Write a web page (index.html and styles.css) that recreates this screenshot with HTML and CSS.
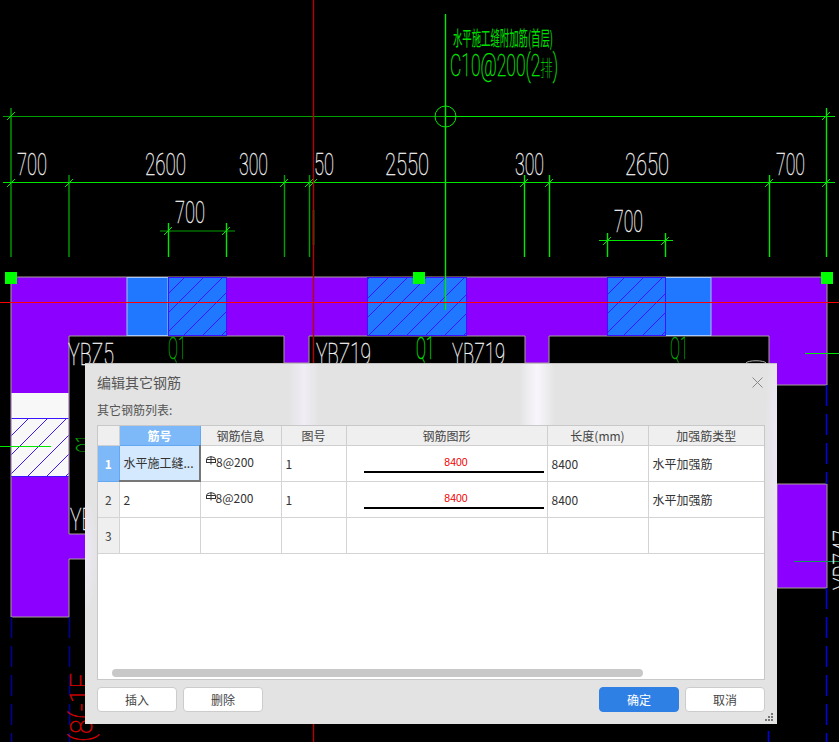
FILE: index.html
```html
<!DOCTYPE html>
<html lang="zh-CN">
<head>
  <meta charset="UTF-8" />
  <title>编辑其它钢筋</title>
  <link rel="stylesheet" href="styles.css">
</head>
<body>
  <!-- CAD drawing behind the dialog -->
  <svg class="cad" width="839" height="742" viewBox="0 0 839 742">
    <defs>
      <pattern id="hatch" width="19" height="19" patternUnits="userSpaceOnUse">
        <path class="hatch-line" d="M-1 20L20 -1"/>
      </pattern>
      <pattern id="hatch1" href="#hatch" x="6"/>
      <pattern id="hatch2" href="#hatch" x="1"/>
      <pattern id="hatch3" href="#hatch" x="9"/>
      <pattern id="hatch4" href="#hatch" x="10"/>
    </defs>

    <!-- wall -->
    <path class="wall" d="M11 277H827V385H769V336H549V363H525V336H309V363H284V336H69V534H110V559H69V617H11Z"/>
    <path class="wall" d="M777 484H827V588H777Z"/>

    <rect class="column" x="127" y="277.5" width="41" height="58"/>
    <rect class="column" x="665" y="277.5" width="46" height="58"/>
    <rect class="block" x="168.500" y="277.500" width="58" height="58"/>
    <rect class="block" x="367.500" y="277.500" width="99" height="58"/>
    <rect class="block" x="607.500" y="277.500" width="58" height="58"/>
    <rect x="168.500" y="277.500" width="58" height="58" fill="url(#hatch1)"/>
    <rect x="367.500" y="277.500" width="99" height="58" fill="url(#hatch2)"/>
    <rect x="607.500" y="277.500" width="58" height="58" fill="url(#hatch3)"/>

    <rect class="blank" x="11.500" y="393" width="57" height="83"/>
    <rect x="11.500" y="418" width="57" height="58" fill="url(#hatch4)"/>
    <path class="block-edge" d="M11.500 418.500H68.500M11.500 476.500H68.500"/>

    <!-- dashed axes -->
    <path class="axis-dark" d="M11.500 617V742M69.500 617V742"/>
    <path class="axis" d="M826.500 385V484M826.500 588V742M768.500 731V742"/>

    <!-- dimension lines -->
    <path class="dim-dark" d="M3 116.500H445M160 231H235"/>
    <path class="dim-dark dim-post" d="M11 108V257M69 175V257M284.500 175V257M309.500 175V257"/>
    <path class="dim" d="M445 116.500H835M3 182.500H835M599 240.500H673"/>
    <path class="dim dim-post" d="M168.500 223V257M226.500 223V257M313.500 210V245M445.500 14V310M524.500 175V257M549.500 175V257M769.500 175V257M826.500 108V257M607.500 233V257M665.500 233V257"/>
    <path class="dim" d="M7 120L15 112M7 187L15 179M65 187L73 179M280 187L288 179M305 187L313 179M309 187L317 179M164 235L172 227M222 235L230 227M520 187L528 179M545 187L553 179M765 187L773 179M822 120L830 112M822 187L830 179M603 245L611 237M661 245L669 237"/>
    <circle class="dim" cx="445.500" cy="116.500" r="10.500"/>
    <path class="dim" d="M0 446.500H51M805 353.500H839"/>
    <path class="dim-mute" d="M794 561.500H839"/>
    <path class="arc" d="M746 363C748 360 764 360 766 363"/>

    <!-- red reference lines -->
    <path class="ref-dark" d="M313.500 0V742"/>
    <path class="ref" d="M0 302.500H839"/>

    <rect class="grip" x="5" y="272" width="12" height="12"/>
    <rect class="grip" x="413" y="272" width="12" height="12"/>
    <rect class="grip" x="821" y="272" width="12" height="12"/>

    <!-- labels -->
    <text class="note" x="453" y="46" textLength="100" lengthAdjust="spacingAndGlyphs">水平施工缝附加筋(首层)</text>
    <text class="label-green" x="450" y="76" textLength="108" lengthAdjust="spacingAndGlyphs">C10@200(2<tspan class="note-glyph">排</tspan>)</text>

    <text class="label" x="17" y="175" textLength="30" lengthAdjust="spacingAndGlyphs">700</text>
    <text class="label" x="145" y="175" textLength="41" lengthAdjust="spacingAndGlyphs">2600</text>
    <text class="label" x="239" y="175" textLength="29" lengthAdjust="spacingAndGlyphs">300</text>
    <text class="label" x="314" y="175" textLength="20" lengthAdjust="spacingAndGlyphs">50</text>
    <text class="label" x="385" y="175" textLength="44" lengthAdjust="spacingAndGlyphs">2550</text>
    <text class="label" x="515" y="175" textLength="29" lengthAdjust="spacingAndGlyphs">300</text>
    <text class="label" x="625" y="175" textLength="44" lengthAdjust="spacingAndGlyphs">2650</text>
    <text class="label" x="776" y="175" textLength="29" lengthAdjust="spacingAndGlyphs">700</text>
    <text class="label" x="175" y="223" textLength="30" lengthAdjust="spacingAndGlyphs">700</text>
    <text class="label" x="614" y="232" textLength="29" lengthAdjust="spacingAndGlyphs">700</text>

    <text class="label" x="68" y="365" textLength="46" lengthAdjust="spacingAndGlyphs">YBZ5</text>
    <text class="label" x="316" y="365" textLength="55" lengthAdjust="spacingAndGlyphs">YBZ19</text>
    <text class="label" x="452" y="365" textLength="53" lengthAdjust="spacingAndGlyphs">YBZ19</text>
    <text class="label" x="70" y="530" textLength="23" lengthAdjust="spacingAndGlyphs">YB</text>
    <text class="label" transform="translate(855 590) rotate(-90)" textLength="60" lengthAdjust="spacingAndGlyphs">YBZ47</text>

    <text class="label-q" x="168" y="359" textLength="18" lengthAdjust="spacingAndGlyphs">Q1</text>
    <text class="label-green" x="416" y="359" textLength="18" lengthAdjust="spacingAndGlyphs">Q1</text>
    <text class="label-q" x="670" y="359" textLength="18" lengthAdjust="spacingAndGlyphs">Q1</text>
    <text class="label-q" transform="translate(98 453) rotate(-90)" textLength="18" lengthAdjust="spacingAndGlyphs">Q1</text>
    <text class="label-red" transform="translate(92 742) rotate(-90)" textLength="69" lengthAdjust="spacingAndGlyphs">(8(-1F</text>
  </svg>

  <div class="dialog" role="dialog">
    <div class="dialog-head">
      <div class="dialog-title">编辑其它钢筋</div>
      <svg class="close-icon" width="11" height="11" viewBox="0 0 11 11"><path d="M0.500 0.500L10.500 10.500M10.500 0.500L0.500 10.500"/></svg>
    </div>
    <div class="list-label">其它钢筋列表:</div>

    <div class="list">
      <table class="rebar-table">
        <colgroup>
          <col class="col-index"><col class="col-name"><col class="col-info"><col class="col-fig"><col class="col-shape"><col class="col-len"><col class="col-type">
        </colgroup>
        <thead>
          <tr>
            <th></th>
            <th class="active-head">筋号</th>
            <th>钢筋信息</th>
            <th>图号</th>
            <th>钢筋图形</th>
            <th>长度(mm)</th>
            <th>加强筋类型</th>
          </tr>
        </thead>
        <tbody>
          <tr>
            <td class="row-index active-head">1</td>
            <td class="selected">水平施工缝...</td>
            <td><span class="grade"><svg class="grade-icon" width="10" height="9" viewBox="0 0 10 9"><path d="M0.500 6.500V3.500C0.500 0 9.500 0 9.500 3.500V6.500M0 6.500H10M5 0V8.500M0.500 3.500H9.500"/></svg>8@200</span></td>
            <td>1</td>
            <td><div class="shape"><span class="shape-len">8400</span></div></td>
            <td>8400</td>
            <td>水平加强筋</td>
          </tr>
          <tr>
            <td class="row-index">2</td>
            <td>2</td>
            <td><span class="grade"><svg class="grade-icon" width="10" height="9" viewBox="0 0 10 9"><path d="M0.500 6.500V3.500C0.500 0 9.500 0 9.500 3.500V6.500M0 6.500H10M5 0V8.500M0.500 3.500H9.500"/></svg>8@200</span></td>
            <td>1</td>
            <td><div class="shape"><span class="shape-len">8400</span></div></td>
            <td>8400</td>
            <td>水平加强筋</td>
          </tr>
          <tr>
            <td class="row-index">3</td>
            <td></td><td></td><td></td><td></td><td></td><td></td>
          </tr>
        </tbody>
      </table>
      <div class="scrollbar"></div>
    </div>

    <div class="dialog-foot">
      <button class="btn" type="button">插入</button>
      <button class="btn" type="button">删除</button>
      <div class="foot-gap"></div>
      <button class="btn btn-primary" type="button">确定</button>
      <button class="btn" type="button">取消</button>
    </div>

    <svg class="resize-grip" width="9" height="8" viewBox="0 0 9 8"><path d="M6 0h2v2H6zM3 3h2v2H3zM6 3h2v2H6zM0 6h2v2H0zM3 6h2v2H3zM6 6h2v2H6z"/></svg>
  </div>
</body>
</html>
```

FILE: styles.css
```css
* {
  box-sizing: border-box;
}

html, body {
  height: 100%;
  margin: 0;
  background: #000;
  overflow: hidden;
  font-family: "Noto Sans CJK SC", "Liberation Sans", sans-serif;
  font-size: 12px;
}

/* CAD canvas */
.cad {
  position: absolute;
  left: 0;
  top: 0;
  display: block;
}

.wall {
  fill: #8b00ff;
  stroke: #a89f94;
  stroke-width: 1;
}

.column {
  fill: #1f78ff;
  stroke: #a5c8ff;
  stroke-width: 1;
}

.block {
  fill: #1f78ff;
  stroke: #3c14ff;
  stroke-width: 1;
}

.block-edge {
  fill: none;
  stroke: #3c14ff;
  stroke-width: 1;
}

.blank {
  fill: #f8f8f8;
}

.hatch-line {
  fill: none;
  stroke: #3c14ff;
  stroke-width: 1;
}

.axis, .axis-dark {
  fill: none;
  stroke-width: 1.500;
  stroke-dasharray: 21 8;
}

.axis {
  stroke: #0000e8;
}

.axis-dark {
  stroke: #000098;
}

.dim, .dim-dark, .dim-mute {
  fill: none;
  stroke-width: 1;
}

.dim {
  stroke: #00e800;
}

.dim-dark {
  stroke: #00a000;
}

.dim-post {
  stroke-width: 1.400;
}

.dim-mute {
  stroke: #109858;
}

.arc {
  fill: none;
  stroke: #b0b0b0;
  stroke-width: 1;
}

.ref, .ref-dark {
  fill: none;
  stroke-width: 1;
}

.ref {
  stroke: #ff0000;
}

.ref-dark {
  stroke: #b80000;
  stroke-width: 1.400;
}

.grip {
  fill: #00ff00;
}

.label, .label-green, .label-q, .label-red {
  font-family: Roboto, "Liberation Sans", sans-serif;
  font-weight: 100;
  font-size: 31px;
  stroke-width: 0.350;
}

.label {
  fill: #f4f4f4;
  stroke: #f4f4f4;
}

.label-green {
  fill: #00f000;
  stroke: #00f000;
}

.label-q {
  fill: #00b800;
  stroke: #00b800;
}

.label-red {
  fill: #e00000;
  stroke: #e00000;
}

.note {
  font-family: "Noto Sans CJK SC", sans-serif;
  font-size: 20px;
  fill: #00e000;
}

.note-glyph {
  font-family: "Noto Sans CJK SC", sans-serif;
  font-size: 22px;
  stroke: none;
}

/* dialog */
.dialog {
  position: absolute;
  left: 85px;
  top: 363px;
  width: 692px;
  height: 361px;
  display: flex;
  flex-direction: column;
  padding: 0 12px;
  color: #333;
  border-top: 1px solid #c4c4c4;
  background-color: #e3e3e3;
  background-image:
    linear-gradient(90deg, transparent, #f8f6fc 50%, transparent),
    linear-gradient(90deg, transparent, #f0edf6 50%, transparent),
    radial-gradient(closest-side, #efe8f8, transparent),
    radial-gradient(closest-side, #efe8f8, transparent);
  background-repeat: no-repeat;
  background-size: 36px 62px, 30px 62px, 24px 300px, 24px 120px;
  background-position: 434px 0, 204px 0, 680px -60px, -12px 130px;
}

.dialog-head {
  display: flex;
  align-items: center;
  justify-content: space-between;
  height: 36px;
}

.dialog-title {
  font-size: 14px;
  color: #555;
}

.close-icon {
  margin-right: 2px;
  fill: none;
  stroke: #888;
  stroke-width: 1;
}

.list-label {
  height: 25px;
  line-height: 20px;
  color: #555;
}

.list {
  flex: none;
  height: 255px;
  display: flex;
  flex-direction: column;
  background: #fff;
  border: 1px solid #c8c8c8;
}

.rebar-table {
  width: 666px;
  table-layout: fixed;
  border-collapse: collapse;
}

.col-index { width: 21px; }
.col-name { width: 81px; }
.col-info { width: 81px; }
.col-fig { width: 65px; }
.col-shape { width: 201px; }
.col-len { width: 101px; }
.col-type { width: 116px; }

.rebar-table th {
  height: 19px;
  padding: 0;
  border: 1px solid #cfcfcf;
  border-top: none;
  background: #efefef;
  font-weight: normal;
  color: #444;
}

.rebar-table th:first-child, .rebar-table td:first-child {
  border-left: none;
}

.rebar-table th:last-child, .rebar-table td:last-child {
  border-right: none;
}

.rebar-table td {
  height: 36px;
  padding: 0 3px 0 4px;
  border: 1px solid #d4d4d4;
  white-space: nowrap;
  overflow: hidden;
}

.rebar-table .row-index {
  padding: 0;
  text-align: center;
  background: #efefef;
  color: #444;
}

.rebar-table .active-head {
  background: #7db8f8;
  border-color: #62a8f2;
  color: #fff;
  font-weight: bold;
}

.rebar-table .selected {
  background: #d4e9fd;
  border-right: 2px solid #777;
  border-bottom: 2px solid #777;
}

.grade {
  display: flex;
  align-items: center;
  margin-top: -3px;
  padding-left: 1px;
}

.grade-icon {
  margin-top: -3px;
  fill: none;
  stroke: #333;
  stroke-width: 1;
}

.shape {
  width: 180px;
  height: 17px;
  margin: 2px 0 0 13px;
  border-bottom: 2px solid #000;
  text-align: center;
}

.shape-len {
  display: block;
  padding-left: 5px;
  font-family: "Liberation Sans", sans-serif;
  font-size: 10.500px;
  line-height: 13px;
  color: #f00000;
}

.scrollbar {
  height: 8px;
  width: 531px;
  margin: auto 0 2px 14px;
  border-radius: 4px;
  background: #c8c8c8;
}

.dialog-foot {
  display: flex;
  gap: 6px;
  margin-top: 7px;
}

.foot-gap {
  flex: 1;
}

.btn {
  width: 80px;
  height: 25px;
  padding: 0;
  font-family: inherit;
  font-size: 12px;
  color: #444;
  background: #fff;
  border: 1px solid #ccc;
  border-radius: 4px;
}

.btn-primary {
  background: #2f80e4;
  border-color: #2f80e4;
  color: #fff;
}

.resize-grip {
  position: absolute;
  right: 3px;
  bottom: 3px;
  fill: #777;
}
```
